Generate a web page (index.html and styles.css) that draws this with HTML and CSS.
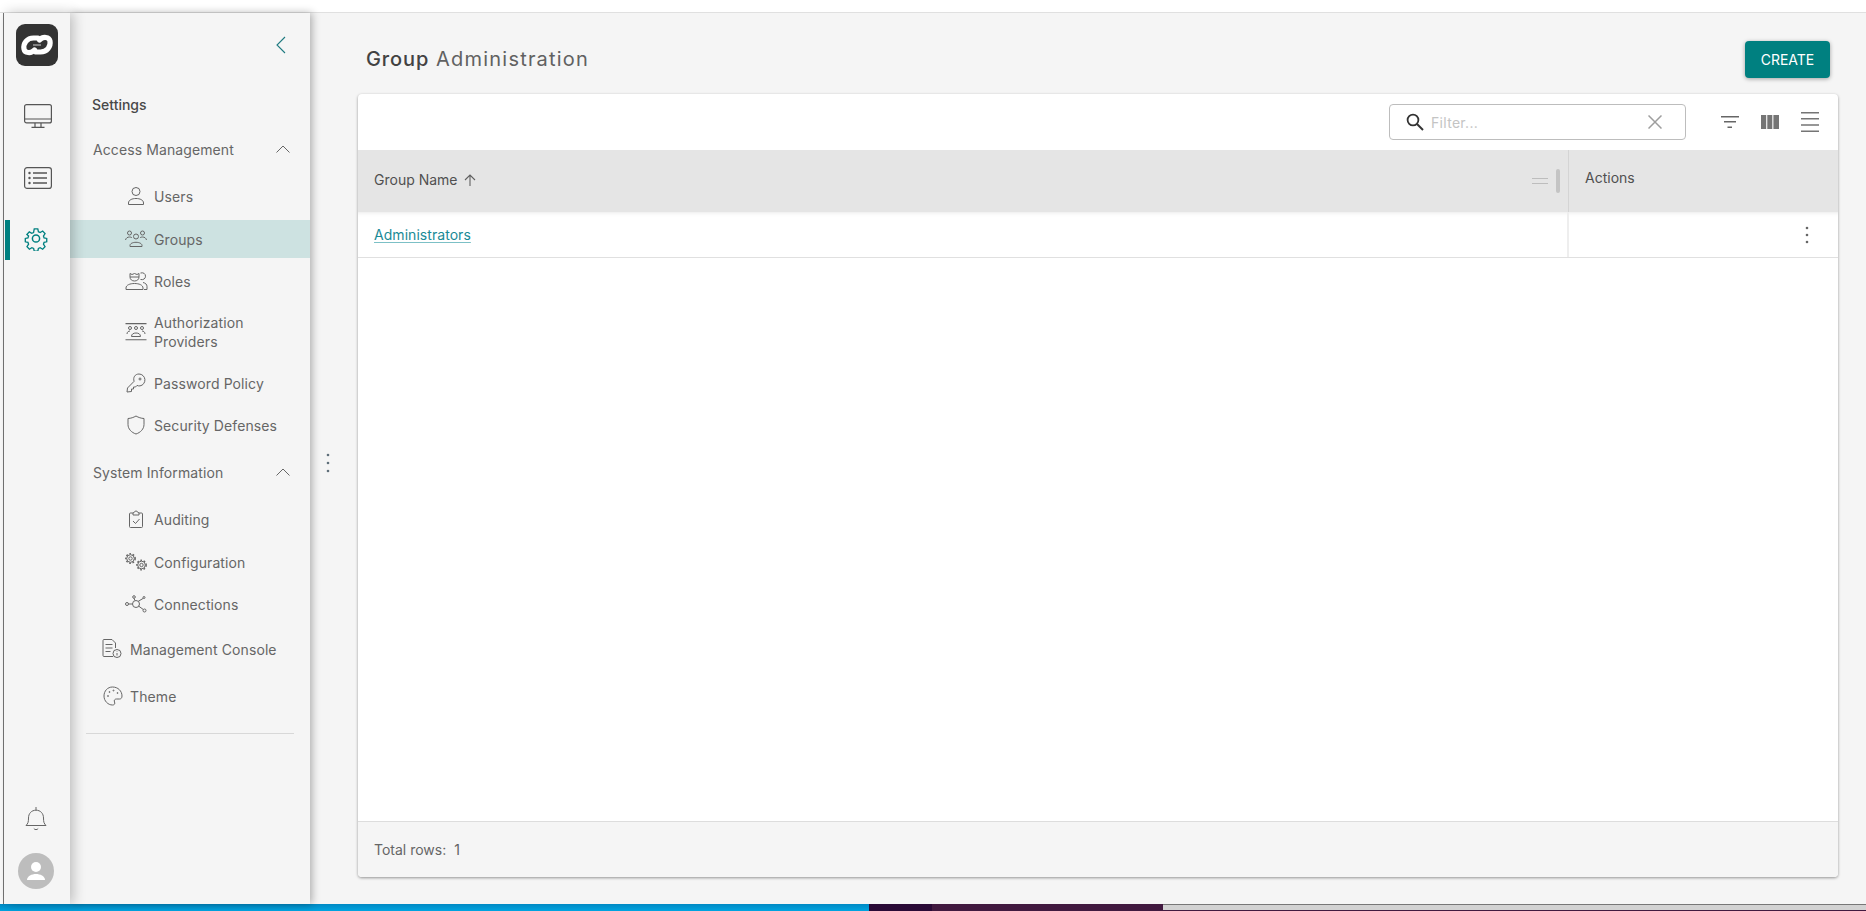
FILE: index.html
```html
<!DOCTYPE html>
<html lang="en">
<head>
<meta charset="utf-8">
<title>Group Administration</title>
<link rel="stylesheet" href="styles.css">
</head>
<body>
<div class="topstrip"></div>
<div class="window">
  <div class="edge"></div>
  <nav class="rail">
    <div class="logo">
      <svg viewBox="0 0 42 42" width="42" height="42"><g fill="none" stroke="#fff" stroke-width="5.200" stroke-linecap="round"><path d="M22 14h-4.500C11 14 7 19.500 8 25c.7 4 7 5 10.500 1"/><path d="M20 28h4.500C31 28 35 22.500 34 17c-.7-4-7-5-10.500-1"/></g><path d="M17 21h8" stroke="#bbb" stroke-width="1.200"/></svg>
    </div>
    <a class="rail-btn rail-btn-monitor">
      <svg viewBox="0 0 28 24" width="28" height="24" class="ico"><rect x=".6" y=".6" width="26.800" height="18.300" rx="2"/><path d="M.6 15h26.800M11 19v4M17 19v4M7.500 23.300h13"/></svg>
    </a>
    <a class="rail-btn rail-btn-list">
      <svg viewBox="0 0 28 22" width="28" height="22" class="ico"><rect x=".6" y=".6" width="26.800" height="20.800" rx="2.500"/><path d="M9 6h14M9 11h14M9 16h14" stroke-width="1.400"/><circle cx="5.500" cy="6" r=".6"/><circle cx="5.500" cy="11" r=".6"/><circle cx="5.500" cy="16" r=".6"/></svg>
    </a>
    <a class="rail-btn rail-btn-active">
      <svg viewBox="0 0 24 24" width="24" height="25" class="ico-teal"><circle cx="12" cy="12" r="3.600"/><path d="M10 1.200h4l.7 3.200 2 .9 2.800-1.700 2.700 3-1.800 2.700.7 2.100 3 .6v3.800l-3 .7-.7 2 1.800 2.800-2.700 2.900-2.800-1.700-2 .9-.7 3h-4l-.7-3-2-.9-2.800 1.700-2.700-2.900 1.800-2.800-.7-2-3-.7v-3.800l3-.6.7-2.100L1.700 7.600l2.700-3 2.800 1.700 2-.9z" transform="translate(1.400 1.300) scale(.885)"/></svg>
    </a>
    <div class="rail-spacer"></div>
    <a class="rail-bell">
      <svg viewBox="0 0 22 25" width="22" height="25" class="ico ico-thin"><path d="M1 19.500c2-2 2.500-3.500 2.500-7.500 0-4.500 3-7.800 7.500-7.800s7.500 3.300 7.500 7.800c0 4 .5 5.500 2.500 7.500zM11 1v3.200M8.800 22.500c1 1.500 3.400 1.500 4.400 0"/></svg>
    </a>
    <div class="avatar">
      <svg viewBox="0 0 36 36" width="36" height="36"><circle cx="18" cy="14" r="5" fill="#fff"/><path d="M9 27c0-4 5-6 9-6s9 2 9 6z" fill="#fff"/></svg>
    </div>
  </nav>

  <aside class="sidebar">
    <div class="collapse">
      <svg viewBox="0 0 10 18" width="10" height="18"><path d="M9 1 1 9l8 8" fill="none" stroke="#1f7a80" stroke-width="1.100"/></svg>
    </div>
    <div class="side-title">Settings</div>
    <div class="section section-first">
      <span>Access Management</span>
      <svg class="chev" viewBox="0 0 14 8" width="14" height="8"><path d="M.5 7.500 7 1l6.500 6.500"/></svg>
    </div>
    <ul class="items">
      <li class="item item-users">
        <svg class="ico-s" viewBox="0 0 22 20" width="22" height="20"><circle cx="11" cy="5.500" r="4"/><path d="M3.500 18.500v-1.500c0-3 3.500-4.500 7.500-4.500s7.500 1.500 7.500 4.500v1.500z"/></svg>
        <span>Users</span>
      </li>
      <li class="item item-active">
        <svg class="ico-s" viewBox="0 0 22 18" width="22" height="18"><circle cx="4.500" cy="3" r="2"/><circle cx="11" cy="6.500" r="2.500"/><circle cx="17.500" cy="3" r="2"/><path d="M.5 10c.5-2 2-3 4-3 1 0 1.700.2 2.300.6M21.500 10c-.5-2-2-3-4-3-1 0-1.700.2-2.300.6M5 16.500v-1c0-2 2.800-3.200 6-3.200s6 1.200 6 3.200v1z"/></svg>
        <span>Groups</span>
      </li>
      <li class="item">
        <svg class="ico-s" viewBox="0 0 23 18" width="23" height="18"><path d="M5 1.500v3.500c0 2.500 2 4 4.500 4s4.500-1.500 4.500-4V1.500l-2 1-2.500-1-2.500 1zM5 5h9M15.500 1c3-.8 5 .8 5 3.200s-2 4-5 3.300M1 17.500V16c0-3 4-4.500 8.500-4.500S18 13 18 16v1.500zM18 10.500c2.500.5 4 2 4 4v3h-3"/></svg>
        <span>Roles</span>
      </li>
      <li class="item item-tall">
        <svg class="ico-s" viewBox="0 0 22 18" width="22" height="18"><path d="M.5.600h21M.5 16.800h21" stroke-width="1.100"/><circle cx="5" cy="5" r="1.500"/><circle cx="11" cy="5" r="1.500"/><circle cx="17" cy="5" r="1.500"/><path d="M2 11c0-2 1.500-3 3-3M20 11c0-2-1.500-3-3-3M6.500 13.500c0-2.500 2-3.500 4.500-3.500s4.500 1 4.500 3.500z"/></svg>
        <span>Authorization<br>Providers</span>
      </li>
      <li class="item">
        <svg class="ico-s" viewBox="-1 0 21 20" width="21" height="20"><path d="M13 1a6 6 0 0 1 1 11.900c-1 .1-2 0-3-.5L9.500 14H7.500v2H5.500v2.500L1 19l.5-4 6.600-6.700C6.800 4.500 9 1 13 1z"/><circle cx="14" cy="6" r="1"/></svg>
        <span>Password Policy</span>
      </li>
      <li class="item">
        <svg class="ico-s" viewBox="-2 0 20 20" width="20" height="20"><path d="M9 1c2.500 1.500 5 2.300 8 2.500v6c0 4.500-3.500 8-8 9.500-4.500-1.500-8-5-8-9.500v-6C4 3.300 6.500 2.500 9 1z"/></svg>
        <span>Security Defenses</span>
      </li>
    </ul>
    <div class="section section-second">
      <span>System Information</span>
      <svg class="chev" viewBox="0 0 14 8" width="14" height="8"><path d="M.5 7.500 7 1l6.500 6.500"/></svg>
    </div>
    <ul class="items items-second">
      <li class="item item-audit">
        <svg class="ico-s" viewBox="-4 0 18 18" width="18" height="18"><path d="M4 3H1.500a1 1 0 0 0-1 1v12.500a1 1 0 0 0 1 1h11a1 1 0 0 0 1-1V4a1 1 0 0 0-1-1H10M4 5V3l3-2.200L10 3v2zM4 11l2.500 2.500L10.500 9"/></svg>
        <span>Auditing</span>
      </li>
      <li class="item">
        <svg class="ico-s" viewBox="0 0 22 18" width="22" height="18"><circle cx="5.500" cy="5.500" r="1.700"/><circle cx="5.500" cy="5.500" r="3.800"/><circle class="teeth" cx="5.500" cy="5.500" r="4.700"/><circle cx="16.500" cy="12" r="1.700"/><circle cx="16.500" cy="12" r="3.800"/><circle class="teeth" cx="16.500" cy="12" r="4.700"/></svg>
        <span>Configuration</span>
      </li>
      <li class="item">
        <svg class="ico-s" viewBox="0 0 22 18" width="22" height="18"><circle cx="2" cy="9" r="1.500"/><circle cx="9" cy="2" r="1.300"/><circle cx="19" cy="2.500" r="1"/><circle cx="19.500" cy="15.500" r="1.500"/><circle cx="11" cy="9" r="3.500"/><path d="M3.500 9h4M9 3.300l1 2.300M18.300 3.300l-5 3M18.300 14.500l-4.800-3.500"/></svg>
        <span>Connections</span>
      </li>
    </ul>
    <ul class="items-top">
      <li class="item-top item-mgmt">
        <svg class="ico-s" viewBox="0 0 20 20" width="20" height="20"><path d="M11 17.500H2a1 1 0 0 1-1-1v-15a1 1 0 0 1 1-1h8l3.500 3.500V9M3.500 5.500h7M3.500 9h7M3.500 12.500h5"/><circle cx="15" cy="14.500" r="4"/><path d="M15 14v2.500M15 12.500v.5"/></svg>
        <span>Management Console</span>
      </li>
      <li class="item-top">
        <svg class="ico-s" viewBox="0 0 20 20" width="20" height="20"><path d="M9.500 1C4.500 1 1 5 1 10s4 9 8.500 9c2 0 2.800-1.300 2-3-.7-1.500 0-3 2-3h3c1.500 0 2.500-1 2.500-3 0-5-4-9-9.500-9z"/><circle cx="5" cy="10" r=".5"/><circle cx="6.500" cy="6" r=".5"/><circle cx="10.500" cy="4.500" r=".5"/><circle cx="14.500" cy="7" r=".5"/></svg>
        <span>Theme</span>
      </li>
    </ul>
    <div class="divider"></div>
  </aside>

  <main class="main">
    <div class="splitter">
      <svg viewBox="0 0 4 20" width="4" height="20"><circle cx="2" cy="2" r="1.300"/><circle cx="2" cy="10" r="1.300"/><circle cx="2" cy="18" r="1.300"/></svg>
    </div>
    <div class="content">
      <header class="page-head">
        <h1 class="page-title"><b>Group</b> <span>Administration</span></h1>
        <button class="create">CREATE</button>
      </header>
      <section class="card">
        <div class="toolbar">
          <div class="search">
            <svg viewBox="0 0 18 18" width="18" height="18"><circle cx="7" cy="7" r="5.400" fill="none" stroke="#333" stroke-width="1.800"/><path d="M11 11l6 6" stroke="#333" stroke-width="2"/></svg>
            <span class="placeholder">Filter...</span>
            <svg class="clear" viewBox="0 0 14 14" width="14" height="14"><path d="M.5.500l13 13M13.500.500l-13 13" stroke="#9e9e9e" stroke-width="1.500"/></svg>
          </div>
          <div class="tools">
            <svg viewBox="0 0 18 14" width="18" height="14"><path d="M0 1h18v1.600H0zM3 6h12v1.600H3zM6.500 11.400h4.500V13H6.500z" fill="#666"/></svg>
            <svg viewBox="0 0 18 14" width="18" height="14"><path d="M0 0h5.200v14H0zM6.300 0h5v14h-5zM12.400 0H18v14h-5.600z" fill="#757575"/></svg>
            <svg viewBox="0 0 18 20" width="18" height="20"><path d="M0 0h18v1.600H0zM0 6h18v1.600H0zM0 12.200h18v1.600H0zM0 18.400h18V20H0z" fill="#757575"/></svg>
          </div>
        </div>
        <div class="thead">
          <div class="th th-name">
            <span class="th-label">Group Name</span>
            <svg class="sort" viewBox="0 0 12 12" width="12" height="12"><path d="M6 12V1M1 6l5-5 5 5" fill="none" stroke="#616161" stroke-width="1.100"/></svg>
            <span class="th-fill"></span>
            <span class="drag"></span>
            <span class="grip"></span>
          </div>
          <div class="th th-actions">Actions</div>
        </div>
        <div class="trow">
          <div class="td td-name"><a class="link">Administrators</a></div>
          <div class="td td-actions">
            <svg viewBox="0 0 4 18" width="4" height="18"><circle cx="2" cy="2" r="1.300"/><circle cx="2" cy="9" r="1.300"/><circle cx="2" cy="16" r="1.300"/></svg>
          </div>
        </div>
        <div class="tbody-fill"></div>
        <footer class="tfoot"><span>Total rows:</span><span class="count">1</span></footer>
      </section>
    </div>
  </main>
</div>
<div class="taskbar">
  <div class="tb-blue"></div>
  <div class="tb-dark"></div>
  <div class="tb-purple"></div>
  <div class="tb-gray"></div>
</div>
</body>
</html>
```

FILE: styles.css
```css
* { box-sizing: border-box; }
html, body { margin: 0; height: 100%; }
body {
  width: 1866px;
  height: 911px;
  overflow: hidden;
  display: flex;
  flex-direction: column;
  background: #fff;
  font-family: Inter, "Liberation Sans", sans-serif;
  font-size: 14px;
  color: #666;
}
svg { display: block; flex: none; }
ul { list-style: none; margin: 0; padding: 0; }

.topstrip { height: 13px; flex: none; background: #fff; border-bottom: 1px solid #e0e0e0; }
.window { flex: 1; display: flex; min-height: 0; background: #f5f5f5; }
.edge { width: 4px; flex: none; background: #fff; border-right: 1px solid #777; }

/* icon rail */
.rail {
  width: 66px;
  flex: none;
  position: relative;
  z-index: 2;
  display: flex;
  flex-direction: column;
  align-items: center;
  background: #f5f5f5;
  box-shadow: 3px 0 12px rgba(0, 0, 0, .24);
  padding-top: 11px;
}
.logo { width: 42px; height: 42px; border-radius: 9px; background: #333; margin-left: -1px; }
.ico, .ico-s, .chev { fill: none; stroke: #555; stroke-width: 1.200; }
.ico-thin { stroke: #666; stroke-width: 1; }
.ico-teal { fill: none; stroke: #008080; stroke-width: 1.500; }
.ico-s { stroke: #666; stroke-width: 1; }
.teeth { stroke-width: 1.400; stroke-dasharray: 1.700 1.700; }
.chev { stroke: #666; stroke-width: 1; }
.rail-btn { display: flex; align-items: center; justify-content: center; width: 100%; margin-left: -2px; }
.rail-btn-monitor { margin-top: 38px; height: 24px; margin-left: 1px; }
.rail-btn-list { margin-top: 39px; height: 22px; margin-left: 1px; }
.rail-btn-active {
  position: relative;
  margin-top: 31px;
  height: 40px;
  padding-bottom: 3px;
}
.rail-btn-active::before {
  content: "";
  position: absolute;
  left: 2px;
  top: 0;
  bottom: 0;
  width: 5px;
  background: #008080;
}
.rail-spacer { flex: 1; }
.rail-bell { margin-left: -2px; }
.avatar { width: 36px; height: 36px; margin: 22px 0 15px -2px; border-radius: 50%; background: #bdbdbd; }

/* settings panel */
.sidebar {
  width: 240px;
  flex: none;
  position: relative;
  z-index: 1;
  background: #f5f5f5;
  box-shadow: 2px 0 8px rgba(0, 0, 0, .3);
  padding-top: 23px;
}
.collapse { height: 18px; padding-left: 206px; }
.side-title { margin: 41px 0 0 22px; height: 20px; line-height: 20px; font-weight: 500; font-size: 14px; color: #484848; }
.section {
  display: flex;
  align-items: center;
  justify-content: space-between;
  height: 38px;
  padding: 0 20px 0 23px;
  font-size: 14px;
  letter-spacing: .1px;
}
.section-first { margin-top: 15px; }
.section-second { margin-top: 9px; }
.items { display: flex; flex-direction: column; gap: 4px; margin-top: 9px; }
.items-second { margin-top: 9px; }
.item, .item-top {
  display: flex;
  align-items: center;
  height: 38px;
  letter-spacing: .1px;
  line-height: 19px;
}
.item { padding-left: 84px; position: relative; }
.item .ico-s { position: absolute; left: 55px; top: 50%; transform: translateY(-50%); }
.item-users { margin-bottom: 1px; }
.item-audit { margin-bottom: 1px; }
.item-tall { height: 56px; }
.item-active { background: #cde2e1; }
.items-top { margin-top: 7px; display: flex; flex-direction: column; gap: 9px; }
.item-top { padding-left: 60px; position: relative; }
.item-top .ico-s { position: absolute; left: 33px; top: 50%; transform: translateY(-50%); }
.item-mgmt .ico-s { left: 32px; }
.divider { height: 1px; margin: 18px 16px 0; background: #d8d8d8; }

/* main */
.main { flex: 1; min-width: 0; display: flex; }
.splitter { width: 48px; flex: none; display: flex; align-items: center; justify-content: center; }
.splitter svg { fill: #5f6f7a; margin-top: 8px; margin-left: -13px; }
.content { flex: 1; min-width: 0; display: flex; flex-direction: column; padding: 0 28px 27px 0; }
.page-head { height: 81px; flex: none; display: flex; align-items: flex-start; justify-content: space-between; padding: 28px 8px 0 8px; }
.page-title { margin: 6px 0 0; font-size: 20px; line-height: 24px; font-weight: 400; letter-spacing: 1.200px; color: #616161; }
.page-title b { font-weight: 500; color: #424242; letter-spacing: .9px; }
.create {
  width: 85px;
  height: 37px;
  border: 0;
  border-radius: 4px;
  background: #008080;
  color: #fff;
  font: 400 14px Inter, "Liberation Sans", sans-serif;
  padding-bottom: 2px;
  box-shadow: 0 1px 4px rgba(0, 0, 0, .35);
}
.card {
  flex: 1;
  display: flex;
  flex-direction: column;
  background: #fff;
  border-radius: 4px;
  overflow: hidden;
  box-shadow: 0 1px 3px rgba(0, 0, 0, .4);
}
.toolbar { height: 56px; flex: none; display: flex; align-items: center; justify-content: flex-end; padding-right: 19px; }
.search {
  width: 297px;
  height: 36px;
  display: flex;
  align-items: center;
  padding: 0 23px 0 16px;
  border: 1px solid #bdbdbd;
  border-radius: 4px;
}
.placeholder { flex: 1; margin-left: 7px; color: #c4c4c4; letter-spacing: .3px; }
.tools { display: flex; align-items: center; gap: 22px; margin-left: 35px; }
.thead { height: 62px; flex: none; display: flex; background: #e5e5e5; }
.th { display: flex; align-items: center; color: #505050; font-size: 14px; }
.th-name { width: 1211px; padding: 0 8px 0 16px; border-right: 1px solid #d4d4d4; font-weight: 400; }
.th-label { margin-bottom: 3px; }
.sort { margin-left: 6px; margin-bottom: 3px; }
.th-fill { flex: 1; }
.drag { width: 16px; height: 6px; border-top: 1.500px solid #bdbdbd; border-bottom: 1.500px solid #bdbdbd; margin-right: 8px; }
.grip { width: 4px; height: 24px; border-radius: 2px; background: #c4c4c4; }
.th-actions { flex: 1; padding: 0 0 8px 16px; font-weight: 400; }
.trow { height: 46px; flex: none; display: flex; border-bottom: 1px solid #e0e0e0; box-shadow: inset 0 5px 5px -5px rgba(0, 0, 0, .12); }
.td { display: flex; align-items: center; }
.td-name { width: 1211px; padding: 0 16px 0 16px; border-right: 2px solid #eee; }
.td-actions { flex: 1; justify-content: flex-end; padding-right: 29px; }
.td-actions svg { fill: #666; }
.link { color: #1a8a96; text-decoration: underline; text-decoration-color: #7cc0c6; text-underline-offset: 2px; letter-spacing: .05px; }
.tbody-fill { flex: 1; }
.tfoot {
  height: 56px;
  flex: none;
  display: flex;
  align-items: center;
  gap: 8px;
  padding: 0 16px;
  background: #f5f5f5;
  border-top: 1px solid #ddd;
  font-size: 14px;
}
.count { color: #616161; }

/* desktop behind the window */
.taskbar { height: 7px; flex: none; display: flex; }
.tb-blue { width: 869px; background: linear-gradient(#0089c4, #00a4e0); }
.tb-dark { width: 63px; background: #2a0a36; }
.tb-purple { width: 231px; background: #41193f; }
.tb-gray { flex: 1; background: #d2d2d2; border-top: 1px solid #777; border-bottom: 1px solid #41193f; }
```
